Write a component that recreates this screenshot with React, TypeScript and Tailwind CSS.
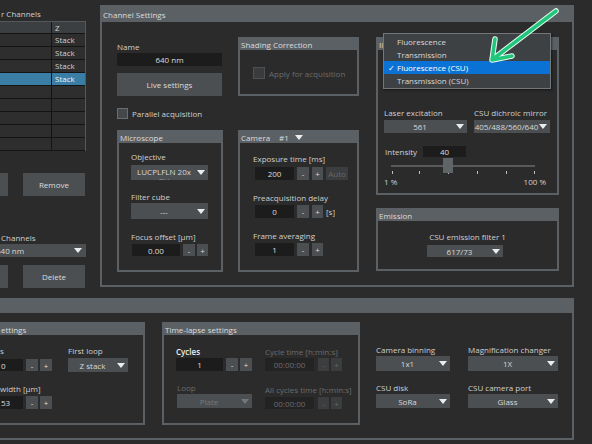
import React from 'react';

// small white triangle used by every combo box
const Caret: React.FC<{ dim?: boolean }> = ({ dim }) => (
  <svg width="8" height="5" viewBox="0 0 8 5" className="shrink-0">
    <polygon points="0,0 8,0 4,5" fill={dim ? '#74777a' : '#ececec'} />
  </svg>
);

const Select: React.FC<{ className?: string; text: string; dim?: boolean }> = ({ className = '', text, dim }) => (
  <div className={`flex items-center bg-[#4b4f52] pr-[3px] shrink-0 ${className}`}>
    <span className={`flex-1 text-center whitespace-nowrap overflow-hidden ${dim ? 'text-[#76787a]' : 'text-[#d8d8d8]'}`}>
      {text}
    </span>
    <Caret dim={dim} />
  </div>
);

const Field: React.FC<{ className?: string; text: string; dim?: boolean; left?: boolean }> = ({ className = '', text, dim, left }) => (
  <div
    className={`flex items-center shrink-0 whitespace-nowrap ${left ? 'justify-start pl-[1px]' : 'justify-center'} ${
      dim ? 'bg-[#232323] text-[#6c6c6c]' : 'bg-[#1c1c1c] text-[#dcdcdc]'
    } ${className}`}
  >
    {text}
  </div>
);

const Btn: React.FC<{ className?: string; text: string; dim?: boolean }> = ({ className = '', text, dim }) => (
  <div
    className={`flex items-center justify-center shrink-0 ${
      dim ? 'bg-[#3b3d3f] text-[#67696b]' : 'bg-[#4b4f52] text-[#dcdcdc]'
    } ${className}`}
  >
    {text}
  </div>
);

const Group: React.FC<{ title: React.ReactNode; className?: string; children?: React.ReactNode }> = ({ title, className = '', children }) => (
  <div className={`flex flex-col border-[#5b6064] shrink-0 ${className}`}>
    <div className="h-[11px] leading-[11px] bg-[#5b6064] text-[#dcdcdc] pl-[1px] shrink-0 whitespace-nowrap overflow-hidden">
      {title}
    </div>
    {children}
  </div>
);

const Label: React.FC<{ className?: string; children: React.ReactNode }> = ({ className = '', children }) => (
  <div className={`h-[11px] whitespace-nowrap ${className}`}>{children}</div>
);

const LeftColumn: React.FC = () => {
  const rows = ['Stack', 'Stack', 'Stack', 'Stack', '', '', '', '', ''];
  return (
    <div className="w-[88px] shrink-0 flex flex-col">
      <Label className="mt-[8px] pl-[1px]">r Channels</Label>
      <div className="mt-[2px] w-[86px] border-t border-r border-[#55595c]">
        <div className="flex h-[12px] bg-[#3c3f42] border-b border-[#141414]">
          <div className="w-[52px] border-r border-[#141414]" />
          <div className="flex-1 pl-[3px] leading-[11px]">Z</div>
        </div>
        {rows.map((r, i) => (
          <div
            key={i}
            className={`flex h-[13px] border-b border-[#141414] ${i === 3 ? 'bg-[#3b7ea5] text-[#eef4f8]' : 'bg-[#2e2e2e]'}`}
          >
            <div className="w-[52px] border-r border-[#141414]" />
            <div className="flex-1 pl-[3px] leading-[12px]">{r}</div>
          </div>
        ))}
      </div>

      <div className="mt-[22px] flex h-[23px]">
        <Btn className="w-[8px]" text="" />
        <Btn className="ml-[15px] w-[62px]" text="Remove" />
      </div>

      <Label className="mt-[36px] pl-[1px]">Channels</Label>
      <div className="mt-[1px] h-[13px] w-[86px] bg-[#4b4f52] flex items-center pr-[4px] overflow-hidden">
        <span className="flex-1 ml-[-4px] whitespace-nowrap text-[#d8d8d8]">640 nm</span>
        <Caret />
      </div>

      <div className="mt-[8px] flex h-[23px]">
        <Btn className="w-[8px]" text="" />
        <Btn className="ml-[15px] w-[62px]" text="Delete" />
      </div>
    </div>
  );
};

const ChannelSettings: React.FC = () => (
  <div className="ml-[12px] mt-[5px] w-[474px] h-[282px] border-2 border-[#5b6064] flex flex-col shrink-0">
    <div className="h-[15px] leading-[15px] bg-[#5b6064] text-[#dcdcdc] pl-[1px] shrink-0">Channel Settings</div>
    <div className="flex pl-[15px]">
      {/* left column */}
      <div className="w-[106px] flex flex-col shrink-0">
        <Label className="mt-[19px]">Name</Label>
        <Field className="mt-[1px] h-[13px] w-[105px]" text="640 nm" />
        <Btn className="mt-[7px] h-[23px] w-[105px]" text="Live settings" />
        <div className="mt-[12px] h-[11px] flex items-center gap-[4px] whitespace-nowrap">
          <div className="w-[11px] h-[11px] border border-[#6b6e70] bg-[#45484a]" />
          Parallel acquisition
        </div>
        <Group title="Microscope" className="mt-[11px] h-[142px] w-[106px] border-2">
          <div className="pl-[12px] flex flex-col">
            <Label className="mt-[8px]">Objective</Label>
            <div className="mt-[3px] h-[15px] w-[77px] bg-[#4b4f52] flex items-center pr-[3px] overflow-hidden">
              <div className="flex-1 h-[15px] flex flex-col items-center pt-[2px] leading-[9px] text-[#d8d8d8] whitespace-nowrap">
                <span>LUCPLFLN 20x</span>
                <span className="text-[#9a9a9a]">PH</span>
              </div>
              <Caret />
            </div>
            <Label className="mt-[11px]">Filter cube</Label>
            <Select className="mt-[1px] h-[16px] w-[77px]" text="---" />
            <Label className="mt-[12px]">Focus offset [µm]</Label>
            <div className="mt-[2px] h-[12px] flex">
              <Field className="ml-[1px] w-[48px]" text="0.00" />
              <Btn className="ml-[3px] w-[12px]" text="-" />
              <Btn className="ml-[2px] w-[11px]" text="+" />
            </div>
          </div>
        </Group>
      </div>

      {/* middle column */}
      <div className="ml-[15px] w-[121px] flex flex-col shrink-0">
        <Group title="Shading Correction" className="mt-[15px] h-[59px] w-[121px] border-2">
          <div className="pl-[13px] mt-[17px] h-[12px] flex items-center gap-[4px] whitespace-nowrap text-[#6b6b6b]">
            <div className="w-[12px] h-[12px] border border-[#4e5153] bg-[#393b3d]" />
            Apply for acquisition
          </div>
        </Group>
        <Group
          title={
            <span className="flex items-center">
              Camera<span className="ml-[9px]">#1</span>
              <span className="ml-[6px] flex">
                <Caret />
              </span>
            </span>
          }
          className="mt-[34px] h-[142px] w-[121px] border-2"
        >
          <div className="pl-[13px] flex flex-col">
            <Label className="mt-[10px]">Exposure time [ms]</Label>
            <div className="mt-[3px] h-[13px] flex">
              <Field className="ml-[2px] w-[39px]" text="200" />
              <Btn className="ml-[3px] w-[12px]" text="-" />
              <Btn className="ml-[3px] w-[11px]" text="+" />
              <Btn className="ml-[3px] w-[22px]" text="Auto" dim />
            </div>
            <Label className="mt-[12px]">Preacquisition delay</Label>
            <div className="mt-[2px] h-[13px] flex items-center">
              <Field className="ml-[2px] w-[39px] h-[13px]" text="0" />
              <Btn className="ml-[3px] w-[12px] h-[13px]" text="-" />
              <Btn className="ml-[3px] w-[11px] h-[13px]" text="+" />
              <span className="ml-[3px]">[s]</span>
            </div>
            <Label className="mt-[12px]">Frame averaging</Label>
            <div className="mt-[2px] h-[13px] flex">
              <Field className="ml-[2px] w-[39px]" text="1" />
              <Btn className="ml-[3px] w-[12px]" text="-" />
              <Btn className="ml-[3px] w-[11px]" text="+" />
            </div>
          </div>
        </Group>
      </div>

      {/* right column */}
      <div className="ml-[17px] w-[183px] flex flex-col shrink-0">
        <Group title="Illumination" className="mt-[15px] h-[158px] w-[183px] border-2">
          <div className="pl-[6px] flex flex-col">
            <Select className="mt-[6px] h-[14px] w-[166px]" text="Fluorescence (CSU)" />
            <div className="mt-[37px] flex">
              <Label className="w-[90px]">Laser excitation</Label>
              <Label>CSU dichroic mirror</Label>
            </div>
            <div className="mt-[2px] flex">
              <Select className="h-[13px] w-[83px]" text="561" />
              <Select className="ml-[7px] h-[13px] w-[76px]" text="405/488/560/640" />
            </div>
            <div className="mt-[13px] h-[11px] flex items-center">
              <span className="ml-[1px] w-[38px]">Intensity</span>
              <Field className="w-[43px] h-[11px]" text="40" />
            </div>
            <svg width="164" height="18" viewBox="0 0 164 18" className="mt-[1px]">
              <rect x="7" y="7" width="144" height="2" fill="#57595b" />
              {[8, 35, 64, 93, 122, 150].map((x) => (
                <rect key={x} x={x} y="13" width="1" height="3" fill="#bdbdbd" />
              ))}
              <rect x="59" y="0" width="10" height="15" fill="#5f6467" />
            </svg>
            <div className="h-[11px] w-[162px] flex justify-between">
              <span>1 %</span>
              <span>100 %</span>
            </div>
          </div>
        </Group>
        <Group title="Emission" className="mt-[13px] h-[63px] w-[183px] border-2">
          <Label className="mt-[10px] text-center">CSU emission filter 1</Label>
          <Select className="mt-[3px] ml-[49px] h-[12px] w-[76px]" text="617/73" />
        </Group>
      </div>
    </div>
  </div>
);

const BottomPanel: React.FC = () => (
  <div className="w-[574px] h-[142px] border-y-2 border-r-2 border-[#5b6064] flex flex-col">
    <div className="h-[13px] bg-[#5b6064] shrink-0" />
    <div className="flex">
      {/* Z-stack group, cut at the left edge */}
      <Group title="ettings" className="mt-[9px] w-[145px] h-[103px] border-y-2 border-r-2">
        <div className="flex">
          <div className="w-[52px] flex flex-col">
            <Label className="mt-[10px]">s</Label>
            <div className="mt-[3px] h-[12px] flex">
              <Field className="w-[23px]" text="0" left />
              <Btn className="ml-[3px] w-[12px]" text="-" />
              <Btn className="ml-[2px] w-[12px]" text="+" />
            </div>
            <Label className="mt-[12px]">width [µm]</Label>
            <div className="mt-[2px] h-[13px] flex">
              <Field className="w-[23px]" text="53" left />
              <Btn className="ml-[3px] w-[12px]" text="-" />
              <Btn className="ml-[2px] w-[12px]" text="+" />
            </div>
          </div>
          <div className="ml-[16px] w-[60px] flex flex-col">
            <Label className="mt-[10px]">First loop</Label>
            <Select className="mt-[2px] h-[14px] w-[60px]" text="Z stack" />
          </div>
        </div>
      </Group>

      <Group title="Time-lapse settings" className="ml-[17px] mt-[9px] w-[198px] h-[103px] border-2">
        <div className="flex pl-[12px]">
          <div className="w-[77px] flex flex-col">
            <Label className="mt-[11px] text-[#eeeeee] font-semibold">Cycles</Label>
            <div className="mt-[1px] h-[13px] flex">
              <Field className="w-[47px]" text="1" />
              <Btn className="ml-[3px] w-[12px]" text="-" />
              <Btn className="ml-[2px] w-[12px]" text="+" />
            </div>
            <Label className="mt-[11px] ml-[1px] text-[#6c6c6c]">Loop</Label>
            <Select className="mt-[1px] ml-[1px] h-[14px] w-[75px]" text="Plate" dim />
          </div>
          <div className="ml-[12px] flex flex-col text-[#6c6c6c]">
            <Label className="mt-[11px]">Cycle time [h:min:s]</Label>
            <div className="mt-[1px] h-[13px] flex">
              <Field className="w-[49px]" text="00:00:00" dim />
              <Btn className="ml-[4px] w-[11px]" text="-" dim />
              <Btn className="ml-[2px] w-[11px]" text="+" dim />
            </div>
            <Label className="mt-[13px]">All cycles time [h:min:s]</Label>
            <div className="mt-[2px] h-[12px] flex">
              <Field className="w-[49px]" text="00:00:00" dim />
              <Btn className="ml-[4px] w-[11px]" text="-" dim />
              <Btn className="ml-[2px] w-[11px]" text="+" dim />
            </div>
          </div>
        </div>
      </Group>

      <div className="ml-[16px] flex">
        <div className="w-[74px] flex flex-col">
          <Label className="mt-[31px]">Camera binning</Label>
          <Select className="mt-[1px] h-[15px] w-[74px]" text="1x1" />
          <Label className="mt-[11px]">CSU disk</Label>
          <Select className="mt-[1px] h-[14px] w-[74px]" text="SoRa" />
        </div>
        <div className="ml-[18px] w-[90px] flex flex-col">
          <Label className="mt-[31px]">Magnification changer</Label>
          <Select className="mt-[1px] h-[15px] w-[90px]" text="1X" />
          <Label className="mt-[11px]">CSU camera port</Label>
          <Select className="mt-[1px] h-[14px] w-[90px]" text="Glass" />
        </div>
      </div>
    </div>
  </div>
);

const ModePopup: React.FC = () => {
  const items = ['Fluorescence', 'Transmission', 'Fluorescence (CSU)', 'Transmission (CSU)'];
  return (
    <div className="absolute left-[383px] top-[33px] w-[168px] h-[56px] bg-[#3e4144] border border-[#74777a] flex flex-col pt-[1px] shadow-[1px_1px_2px_rgba(0,0,0,0.5)]">
      {items.map((it, i) => (
        <div
          key={it}
          className={`relative h-[13px] leading-[13px] pl-[13px] whitespace-nowrap ${
            i === 2 ? 'bg-[#0a72d4] text-white' : 'text-[#d8d8d8]'
          }`}
        >
          {i === 2 && <span className="absolute left-[4px] top-0">✓</span>}
          {it}
        </div>
      ))}
    </div>
  );
};

const Arrow: React.FC = () => (
  <svg className="absolute left-[480px] top-0" width="90" height="70" viewBox="0 0 90 70">
    <g fill="none" strokeLinecap="round" strokeLinejoin="round">
      <path d="M76 11 L13 59 M15 39 L12 60 L32 56" stroke="#e9fff3" strokeWidth="5.5" />
      <path d="M76 11 L13 59 M15 39 L12 60 L32 56" stroke="#1fc67b" strokeWidth="3.5" />
    </g>
  </svg>
);

export default function App() {
  return (
    <div className="relative w-[592px] h-[444px] overflow-hidden bg-[#2b2b2b] text-[8px] leading-[11px] text-[#d0d0d0] font-['Open_Sans',sans-serif]">
      <div className="flex h-[298px]">
        <LeftColumn />
        <ChannelSettings />
      </div>
      <BottomPanel />
      <ModePopup />
      <Arrow />
    </div>
  );
}
